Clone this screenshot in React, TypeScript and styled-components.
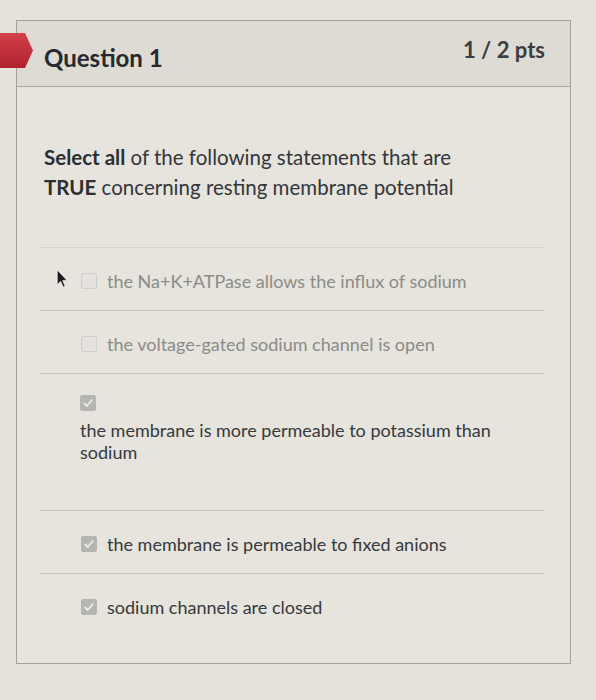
import React from "react";
import styled, { createGlobalStyle } from "styled-components";

const Global = createGlobalStyle`
  html, body { margin: 0; padding: 0; }
  body {
    background: #e4e2da;
    font-family: Lato, "Open Sans", "Liberation Sans", sans-serif;
    width: 596px;
    height: 700px;
    overflow: hidden;
  }
`;

const Page = styled.div`
  position: relative;
  padding: 20px 0 0 16px;
  height: 700px;
  box-sizing: border-box;
`;

const Card = styled.div`
  width: 555px;
  height: 644px;
  box-sizing: border-box;
  border: 1px solid #a3a29d;
  background: #e6e4dc;
`;

const Header = styled.div`
  height: 66px;
  box-sizing: border-box;
  display: flex;
  align-items: center;
  justify-content: space-between;
  padding: 0 25px 2px 27px;
  background: #dddbd3;
  border-bottom: 1px solid #a9a8a3;
`;

const Title = styled.div`
  font-size: 24px;
  font-weight: 700;
  color: #26292e;
  margin-top: 9px;
`;

const Points = styled.div`
  font-size: 22px;
  font-weight: 700;
  color: #3a3d42;
  margin-top: -7px;
`;

const Flag = styled.svg`
  position: absolute;
  left: 0;
  top: 33px;
`;

const Body = styled.div`
  padding: 55px 26px 0 27px;
`;

const Prompt = styled.div`
  font-size: 20.5px;
  line-height: 30px;
  color: #33363a;
  b { font-weight: 700; color: #2b2e33; }
`;

const Answers = styled.div`
  margin: 45px 0 0 -4px;
  width: 505px;
`;

const Row = styled.div<{ $stacked?: boolean; $first?: boolean }>`
  position: relative;
  border-top: 1px solid ${(p) => (p.$first ? "#d6d4cc" : "#c9c7bf")};
  padding: ${(p) => (p.$stacked ? "21px 0 47px 40px" : "22px 0 18px 41px")};
  display: flex;
  flex-direction: ${(p) => (p.$stacked ? "column" : "row")};
  align-items: ${(p) => (p.$stacked ? "flex-start" : "center")};
  gap: ${(p) => (p.$stacked ? "8px" : "10px")};
`;

const Box = styled.span<{ $checked?: boolean }>`
  flex: none;
  width: 16px;
  height: 16px;
  box-sizing: border-box;
  border-radius: 2px;
  display: flex;
  align-items: center;
  justify-content: center;
  background: ${(p) => (p.$checked ? "#b5b5b1" : "#e3e2dc")};
  border: 1px solid ${(p) => (p.$checked ? "#b5b5b1" : "#cfceC9")};
`;

const Label = styled.span<{ $checked?: boolean }>`
  font-size: 18px;
  line-height: 22px;
  color: ${(p) => (p.$checked ? "#36393d" : "#8b8b89")};
  max-width: 430px;
`;

const Cursor = styled.svg`
  position: absolute;
  left: 16px;
  top: 21px;
`;

const Check = () => (
  <svg width="12" height="12" viewBox="0 0 12 12">
    <path d="M2.2 6.4 L4.8 9 L9.8 3" fill="none" stroke="#ececea" strokeWidth="1.8" strokeLinecap="round" strokeLinejoin="round" />
  </svg>
);

const answers = [
  { text: "the Na+K+ATPase allows the influx of sodium", checked: false },
  { text: "the voltage-gated sodium channel is open", checked: false },
  { text: "the membrane is more permeable to potassium than sodium", checked: true, stacked: true },
  { text: "the membrane is permeable to fixed anions", checked: true },
  { text: "sodium channels are closed", checked: true },
];

export default function App() {
  return (
    <>
      <Global />
      <Page>
        <Flag width="34" height="35" viewBox="0 0 34 35">
          <defs>
            <linearGradient id="fg" x1="0" y1="0" x2="0" y2="1">
              <stop offset="0" stopColor="#d2414a" />
              <stop offset="1" stopColor="#b0222d" />
            </linearGradient>
          </defs>
          <path d="M0 0 H25 L33 17.5 L25 35 H0 Z" fill="url(#fg)" />
        </Flag>
        <Card>
          <Header>
            <Title>Question 1</Title>
            <Points>1 / 2 pts</Points>
          </Header>
          <Body>
            <Prompt>
              <b>Select all</b> of the following statements that are
              <br />
              <b>TRUE</b> concerning resting membrane potential
            </Prompt>
            <Answers>
              {answers.map((a, i) => (
                <Row key={i} $stacked={a.stacked} $first={i === 0}>
                  {i === 0 && (
                    <Cursor width="11" height="19" viewBox="0 0 10 18">
                      <path d="M1 1 L1 15 L4.2 11.6 L6.6 17 L8.4 16.2 L6.1 10.9 L10 10.6 Z" fill="#1a1a1a" stroke="#f2f2f2" strokeWidth="0.6" />
                    </Cursor>
                  )}
                  <Box $checked={a.checked}>{a.checked && <Check />}</Box>
                  <Label $checked={a.checked}>{a.text}</Label>
                </Row>
              ))}
            </Answers>
          </Body>
        </Card>
      </Page>
    </>
  );
}
